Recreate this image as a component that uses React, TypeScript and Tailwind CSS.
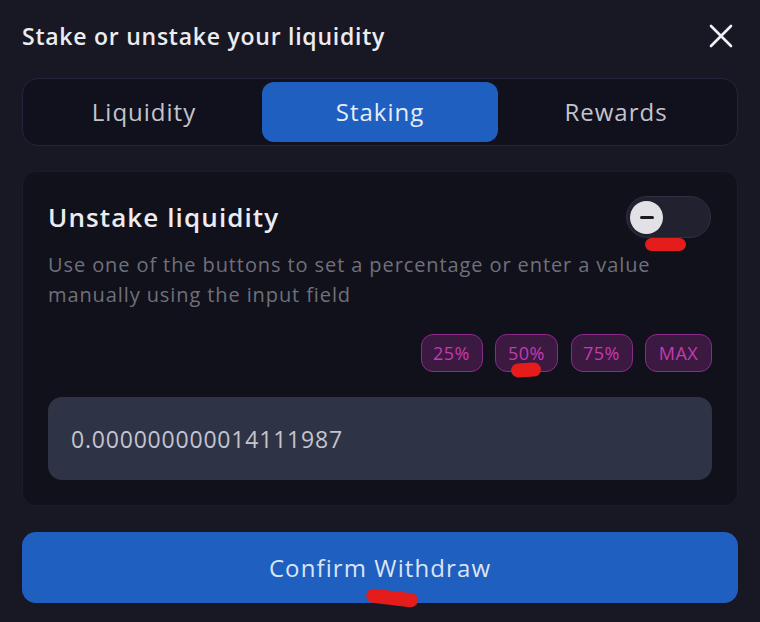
import { useState } from 'react'

type Tab = 'Liquidity' | 'Staking' | 'Rewards'

const tabs: Tab[] = ['Liquidity', 'Staking', 'Rewards']
const presets = [
  { label: '25%', w: 'w-[62px]' },
  { label: '50%', w: 'w-[63px]' },
  { label: '75%', w: 'w-[62px]' },
  { label: 'MAX', w: 'w-[67px]' },
]

export default function App() {
  const [tab, setTab] = useState<Tab>('Staking')
  const [value, setValue] = useState('0.000000000014111987')

  return (
    <div className="min-h-[622px] w-[760px] bg-[#181824] px-[22px] pt-[18px] font-['Open_Sans',sans-serif] text-white">
      {/* Header */}
      <div className="flex h-[36px] items-center justify-between">
        <h2 className="text-[23px] font-semibold tracking-[0.75px] text-[#ececf0]">Stake or unstake your liquidity</h2>
        <button className="mr-[5px] text-[#f0f0f4]">
          <svg width="24" height="24" viewBox="0 0 24 24" fill="none" stroke="currentColor" strokeWidth="2.6" strokeLinecap="round">
            <path d="M2 2L22 22M22 2L2 22" />
          </svg>
        </button>
      </div>

      {/* Tabs */}
      <div className="mt-[24px] grid h-[68px] grid-cols-3 rounded-[16px] border border-[#24243a] bg-[#11111d] p-[3px]">
        {tabs.map(t => (
          <button
            key={t}
            onClick={() => setTab(t)}
            className={
              t === tab
                ? 'rounded-[12px] bg-[#1e5fc0] text-[24px] tracking-[1px] text-[#e6ecf8]'
                : 'rounded-[12px] text-[24px] tracking-[1px] text-[#c4c4cc]'
            }
          >
            {t}
          </button>
        ))}
      </div>

      {/* Card */}
      <div className="mt-[25px] rounded-[14px] border border-[#1b1b2a] bg-[#11111c] px-[25px] pb-[25px] pt-[24px]">
        <div className="flex items-center justify-between">
          <h3 className="text-[26px] font-semibold tracking-[1.1px] text-[#ececf0]">Unstake liquidity</h3>
          <div className="relative mr-[1px]">
            <div className="flex h-[42px] w-[85px] items-center rounded-full border border-[#2e2f40] bg-[#212130] px-[3px]">
              <div className="flex h-[33px] w-[33px] items-center justify-center rounded-full bg-[#e2e2e6]">
                <div className="h-[3px] w-[14px] rounded-full bg-[#1a1a22]" />
              </div>
            </div>
            <div className="absolute left-[19px] top-[42px] h-[13px] w-[41px] rounded-full bg-[#e41c1c]" />
          </div>
        </div>

        <p className="mt-[12px] pr-[40px] text-[20px] leading-[30px] tracking-[0.9px] text-[#70707a]">
          Use one of the buttons to set a percentage or enter a value manually using the input field
        </p>

        <div className="mt-[24px] flex justify-end gap-[12.5px]">
          {presets.map(p => (
            <button
              key={p.label}
              className={`relative h-[38px] ${p.w} rounded-[12px] border border-[#8c2a8a] bg-[#3c1940] text-[18px] tracking-[0.5px] text-[#c43bb0]`}
            >
              {p.label}
              {p.label === '50%' && (
                <span className="absolute left-[15px] top-[28px] h-[14px] w-[30px] -rotate-3 rounded-full bg-[#e41c1c]" />
              )}
            </button>
          ))}
        </div>

        <input
          value={value}
          onChange={e => setValue(e.target.value)}
          className="mt-[25px] h-[83px] w-full rounded-[14px] bg-[#2f3346] px-[23px] text-[23px] tracking-[0.8px] text-[#c4c4cc] outline-none"
        />
      </div>

      {/* Submit */}
      <button className="relative mt-[26px] h-[71px] w-full rounded-[14px] bg-[#1e5fc0] text-[24px] tracking-[1.1px] text-[#dde4f2]">
        Confirm Withdraw
        <span className="absolute left-[344px] top-[59px] h-[14px] w-[52px] rotate-[7deg] rounded-full bg-[#e41c1c]" />
      </button>
    </div>
  )
}
